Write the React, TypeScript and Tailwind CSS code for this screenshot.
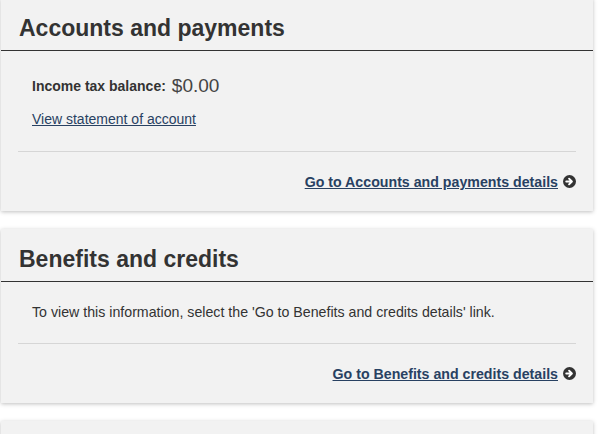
const font = { fontFamily: '"Liberation Sans", Arial, sans-serif' };

function ArrowCircle() {
  return (
    <svg width="13" height="13" viewBox="0 0 12 12" className="inline-block ml-[5px] align-[-1px]">
      <circle cx="6" cy="6" r="6" fill="#333" />
      <path d="M3 6h5M5.6 3.4L8.2 6 5.6 8.6" stroke="#fff" strokeWidth="1.8" fill="none" strokeLinecap="round" strokeLinejoin="round" />
    </svg>
  );
}

function Card({ title, children, link, className = '' }: { title: string; children: React.ReactNode; link: string; className?: string }) {
  return (
    <section className={`ml-[1px] w-[592px] bg-[#f2f2f2] shadow-[0_1px_4px_rgba(0,0,0,0.25)] ${className}`}>
      <div className="pt-[17px] pb-[9px] px-[18px] border-b border-[#333]">
        <h2 className="text-[23px] leading-[26px] font-bold text-[#333]">{title}</h2>
      </div>
      <div className="px-[17px] pb-[19px]">
        {children}
        <div className="border-t border-[#d6d6d6] pt-[20px] text-right text-[14px] leading-[20px]">
          <a href="#" className="text-[14.2px] leading-[20px] font-bold text-[#284162] underline">
            {link}
          </a>
          <ArrowCircle />
        </div>
      </div>
    </section>
  );
}

export default function App() {
  return (
    <div className="bg-white w-[600px] h-[434px] overflow-hidden text-[#333]" style={font}>
      <Card title="Accounts and payments" link="Go to Accounts and payments details" className="-mt-[2px]">
        <div className="pt-[23px] pl-[14px] pb-[22px]">
          <p className="h-[24px] flex items-center text-[14px]">
            <span className="font-bold">Income tax balance:</span>
            <span className="text-[19px] ml-[6px] text-[#444]">$0.00</span>
          </p>
          <a href="#" className="block mt-[11px] text-[14px] leading-[20px] text-[#284162] underline">
            View statement of account
          </a>
        </div>
      </Card>
      <Card title="Benefits and credits" link="Go to Benefits and credits details" className="mt-[18px]">
        <p className="pt-[20px] pb-[21px] pl-[14px] text-[14.2px] leading-[20px] text-[#333]">
          To view this information, select the 'Go to Benefits and credits details' link.
        </p>
      </Card>
      <section className="ml-[1px] mt-[18px] w-[592px] h-[100px] bg-[#f2f2f2] shadow-[0_1px_4px_rgba(0,0,0,0.25)]" />
    </div>
  );
}
